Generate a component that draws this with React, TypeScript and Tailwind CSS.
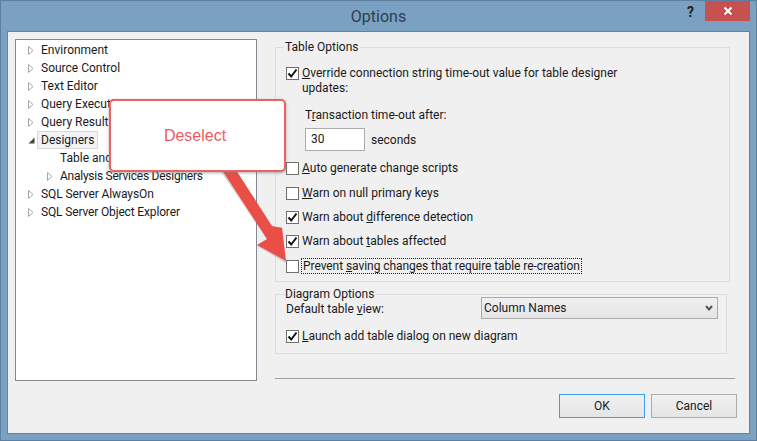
const font = { fontFamily: 'Roboto, "Liberation Sans", sans-serif' };

function Tri({ open }: { open?: boolean }) {
  return open ? (
    <svg width="7" height="7" viewBox="0 0 7 7" className="shrink-0"><path d="M6.5 0.5V6.5H0.5Z" fill="#444" /></svg>
  ) : (
    <svg width="6" height="9" viewBox="0 0 6 9" className="shrink-0"><path d="M0.5 0.5L5 4.5L0.5 8.5Z" fill="#fff" stroke="#a6a6a6" /></svg>
  );
}

function TreeRow({ label, indent, open, noArrow, selected, tight }: { label: string; indent?: boolean; open?: boolean; noArrow?: boolean; selected?: boolean; tight?: string }) {
  return (
    <div className={indent ? "h-[18px] flex items-center pl-[31px]" : "h-[18px] flex items-center pl-[12px]"}>
      <span className="w-[6px] flex justify-center shrink-0">{noArrow ? null : <Tri open={open} />}</span>
      <span className={selected ? "ml-[3px] px-[3px] h-[18px] leading-[16px] bg-[#f3f3f3] border border-[#d8d8d8]" : `ml-[4px] px-[3px] leading-[18px] whitespace-nowrap ${tight ?? ""}`}>{label}</span>
    </div>
  );
}

function Box({ checked }: { checked?: boolean }) {
  return (
    <span className="w-[13px] h-[13px] bg-white border border-[#6f6f6f] shrink-0 flex items-center justify-center">
      {checked ? (
        <svg width="11" height="11" viewBox="0 0 11 11"><path d="M1.5 5.5L4.2 8.5L9.5 1.5" fill="none" stroke="#111" strokeWidth="2" /></svg>
      ) : null}
    </span>
  );
}

function Check({ checked, children, focus, mt }: { checked?: boolean; children: React.ReactNode; focus?: boolean; mt: string }) {
  return (
    <div className={`flex items-center h-[16px] ${mt}`}>
      <Box checked={checked} />
      <span className={focus ? "ml-[2px] px-[1px] border border-dotted border-[#222] leading-[14px] h-[16px] whitespace-nowrap tracking-[-0.06px]" : "ml-[3px] leading-[16px] whitespace-nowrap"}>
        {children}
      </span>
    </div>
  );
}

export default function App() {
  return (
    <div style={font} className="relative w-[757px] h-[441px] overflow-hidden bg-[#7aa0c2] border border-[#5f7f9e] text-[12px] text-[#1a1a1a]">
      <div className="h-[30px] relative flex items-center justify-center">
        <span className="text-[16px] text-[#2f3f4f] mt-[1px]">Options</span>
        <div className="absolute right-[6px] top-0 w-[45px] h-[20px] bg-[#c75050] flex items-center justify-center">
          <svg width="10" height="10" viewBox="0 0 10 10"><path d="M1.5 1.5L8.5 8.5M8.5 1.5L1.5 8.5" stroke="#fff" strokeWidth="2" /></svg>
        </div>
        <span className="absolute left-[686px] top-[1px] text-[14px] font-bold text-[#222]">?</span>
      </div>

      <div className="mx-[6px] w-[743px] h-[403px] bg-[#f0f0f0] border border-[#6f7f8f] flex pl-[7px] pt-[7px]">
        <div className="w-[242px] h-[342px] bg-white border border-[#828790] shrink-0 pt-[1px]">
          <TreeRow label="Environment" />
          <TreeRow label="Source Control" />
          <TreeRow label="Text Editor" />
          <TreeRow label="Query Execution" />
          <TreeRow label="Query Results" />
          <TreeRow label="Designers" open selected />
          <TreeRow label="Table and Database Designers" indent noArrow />
          <TreeRow label="Analysis Services Designers" indent tight="tracking-[-0.25px]" />
          <TreeRow label="SQL Server AlwaysOn" tight="tracking-[-0.1px]" />
          <TreeRow label="SQL Server Object Explorer" tight="tracking-[-0.15px]" />
        </div>

        <div className="ml-[18px] w-[462px] flex flex-col">
          <fieldset className="w-[455px] h-[243px] border border-[#dcdcdc] pl-[10px]">
            <legend className="ml-[-2px] px-[1px] leading-[16px]">Table Options</legend>
            <div className="flex h-[16px] mt-[10px] items-center">
              <Box checked />
              <span className="ml-[3px] whitespace-nowrap"><u>O</u>verride connection string time-out value for table designer</span>
            </div>
            <div className="pl-[16px] leading-[16px] mt-[-1px]">updates:</div>
            <div className="pl-[19px] mt-[11px] leading-[16px]">T<u>r</u>ansaction time-out after:</div>
            <div className="pl-[19px] mt-[5px] flex items-center">
              <div className="w-[60px] h-[23px] bg-white border border-[#ababab] pl-[5px] leading-[20px]">30</div>
              <span className="ml-[6px]">seconds</span>
            </div>
            <Check mt="mt-[9px]"><u>A</u>uto generate change scripts</Check>
            <Check mt="mt-[9px]"><u>W</u>arn on null primary keys</Check>
            <Check mt="mt-[8px]" checked>Warn about <u>d</u>ifference detection</Check>
            <Check mt="mt-[8px]" checked>Warn about <u>t</u>ables affected</Check>
            <Check mt="mt-[9px]" focus>Prevent <u>s</u>aving changes that require table re-creation</Check>
          </fieldset>

          <fieldset className="w-[452px] h-[67px] border border-[#dcdcdc] mt-[5px] pl-[10px]">
            <legend className="ml-[-2px] px-[1px] leading-[14px]">Diagram Options</legend>
            <div className="flex items-center">
              <span className="w-[195px] mt-[-3px]">Default table <u>v</u>iew:</span>
              <div className="w-[237px] h-[22px] border border-[#acacac] bg-gradient-to-b from-[#f0f0f0] to-[#e5e5e5] pl-[2px] pr-[4px] flex items-center justify-between mt-[-4px]">
                <span>Column Names</span>
                <svg width="8" height="6" viewBox="0 0 8 6"><path d="M1 1L4 4.5L7 1" fill="none" stroke="#555" strokeWidth="2" /></svg>
              </div>
            </div>
            <div className="flex items-center mt-[9px] h-[16px]">
              <Box checked />
              <span className="ml-[3px]"><u>L</u>aunch add table dialog on new diagram</span>
            </div>
          </fieldset>

          <div className="w-[460px] h-px bg-[#a0a0a0] mt-[24px]" />
          <div className="flex justify-end mt-[15px] gap-[6px] w-[462px]">
            <div className="w-[86px] h-[24px] border border-[#3c9bea] bg-gradient-to-b from-[#f0f0f0] to-[#e5e5e5] flex items-center justify-center">OK</div>
            <div className="w-[86px] h-[24px] border border-[#acacac] bg-gradient-to-b from-[#f0f0f0] to-[#e5e5e5] flex items-center justify-center">Cancel</div>
          </div>
        </div>
      </div>

      <svg width="300" height="300" className="absolute -left-px -top-px pointer-events-none" viewBox="0 0 300 300">
        <path d="M221 171L233 171L268 226L282 226L286 262L257 245L268 240Z" fill="#8c8c8c" opacity="0.35" transform="translate(0,1)" />
        <path d="M222 170L236 170L272 226L282 228L286 261L257 245L267 239Z" fill="#e94f47" />
      </svg>
      <div className="absolute left-[108px] top-[98px] w-[177px] h-[73px] bg-white border-2 border-[#ea6363] rounded-[5px] shadow-[0_1px_3px_rgba(120,120,120,0.6)] flex items-center justify-center pr-[5px]" style={{ fontFamily: '"Liberation Sans", sans-serif' }}>
        <span className="text-[16px] text-[#ef5b60]">Deselect</span>
      </div>
    </div>
  );
}
